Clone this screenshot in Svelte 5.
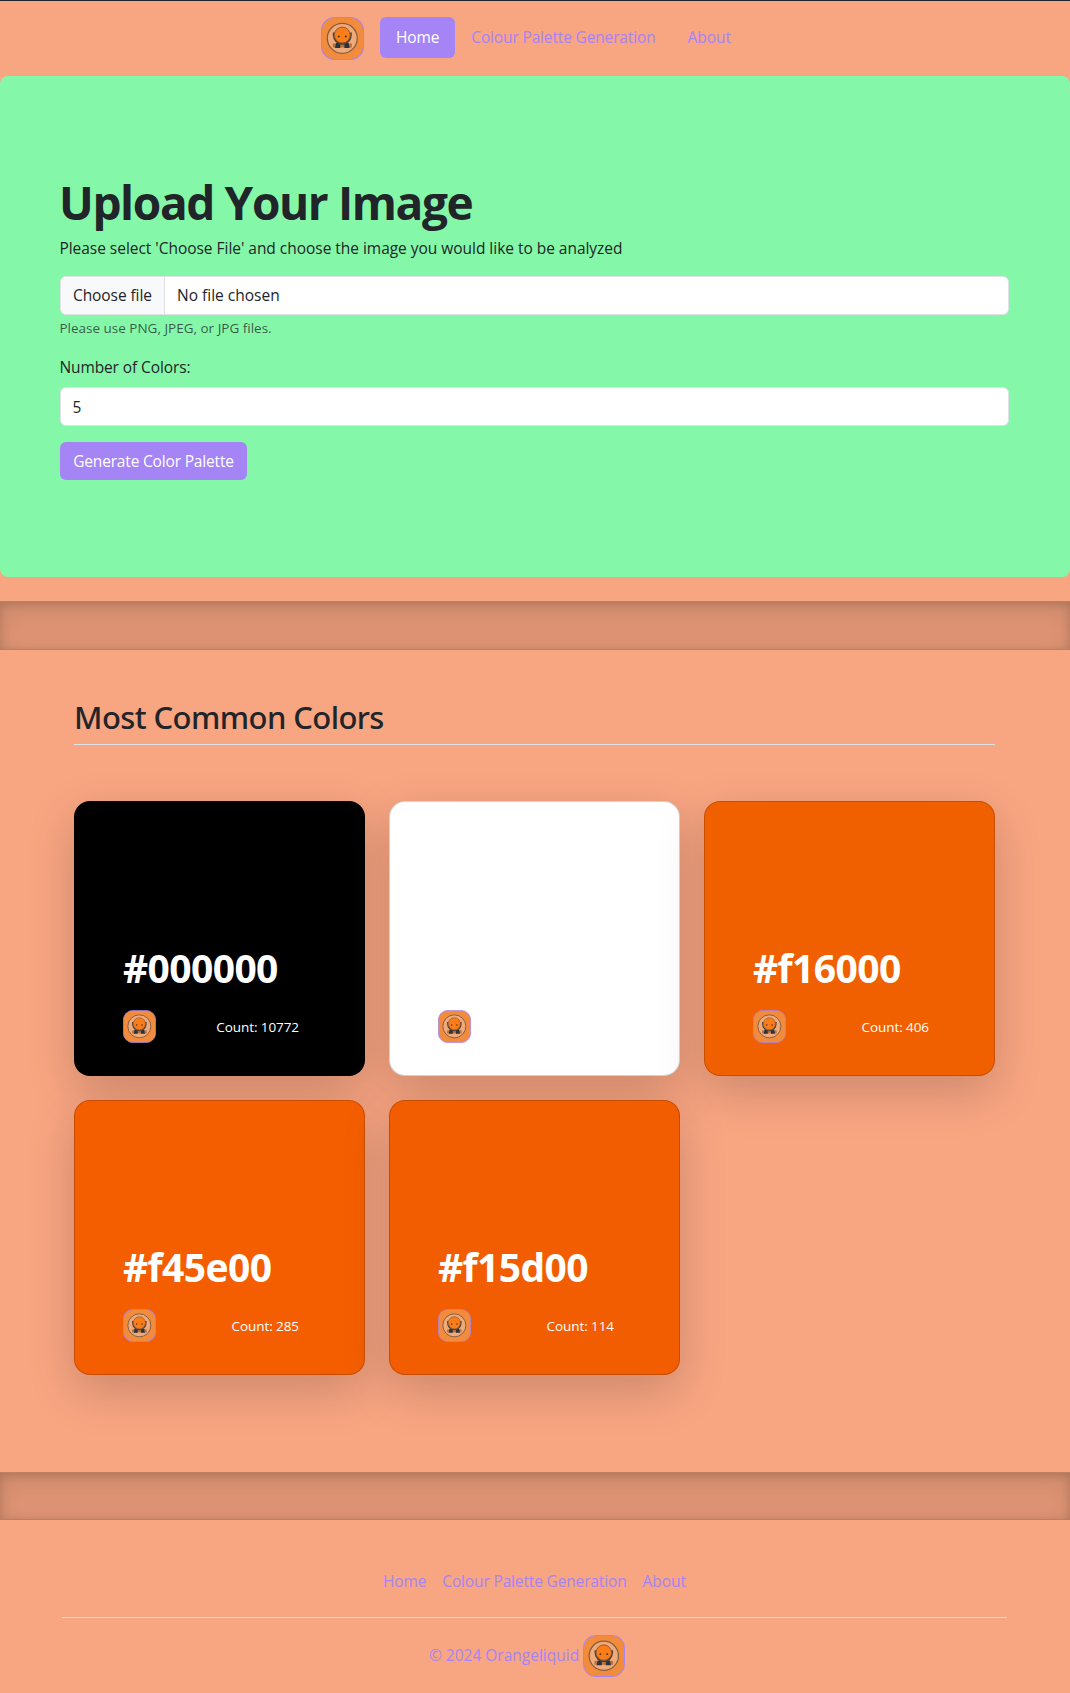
<script>
  const navLinks = [
    { label: 'Home', cls: 'home', active: true },
    { label: 'Colour Palette Generation', cls: 'palette', active: false },
    { label: 'About', cls: 'about', active: false }
  ];

  const colors = [
    { hex: '#000000', count: 10772 },
    { hex: '#ffffff', count: 1204 },
    { hex: '#f16000', count: 406 },
    { hex: '#f45e00', count: 285 },
    { hex: '#f15d00', count: 114 }
  ];

  let amount = $state('5');
</script>

{#snippet logo(cls)}
  <svg class="logo {cls}" viewBox="0 0 43 43" aria-hidden="true">
    <rect x="0.5" y="0.5" width="42" height="42" rx="12.5" fill="#f38b3c" stroke="#a584f6" />
    <circle cx="21.3" cy="21.3" r="15" fill="#efa97a" stroke="#85603f" stroke-width="1.3" />
    <path d="M11.8 26.500h19v4h-19z" fill="#b5713f" />
    <path d="M15 26h4.200v5h-5.200zM27.600 26h-4.200v5h5.200z" fill="#2b3338" />
    <path d="M12.800 15.500v2.800a8.500 8.500 0 0 0 17 0v-2.800" fill="none" stroke="#46403a" stroke-width="1.900" />
    <circle cx="21.300" cy="18" r="7.900" fill="#fa7d1a" stroke="#9a5a2c" stroke-width="1" />
    <circle cx="17.800" cy="19.600" r="1" fill="#4b3322" />
    <circle cx="24.800" cy="19.600" r="1" fill="#4b3322" />
  </svg>
{/snippet}

<header>
  {@render logo('brand')}
  <nav class="pills">
    {#each navLinks as link}
      <a href="#top" class="pill {link.cls}" class:active={link.active}>{link.label}</a>
    {/each}
  </nav>
</header>

<section class="upload">
  <h1>Upload Your Image</h1>
  <p class="lead">Please select 'Choose File' and choose the image you would like to be analyzed</p>
  <label class="file">
    <span class="choose">Choose file</span>
    <span class="chosen">No file chosen</span>
    <input type="file" hidden />
  </label>
  <p class="hint">Please use PNG, JPEG, or JPG files.</p>
  <label class="count-label" for="amount">Number of Colors:</label>
  <input id="amount" class="field" type="text" bind:value={amount} />
  <button type="button">Generate Color Palette</button>
</section>

<div class="divider"></div>

<section class="results">
  <h2>Most Common Colors</h2>
  <div class="cards">
    {#each colors as color}
      <article class="card" style:background-color={color.hex}>
        <h3>{color.hex}</h3>
        <div class="meta">
          {@render logo('small')}
          <span>Count: {color.count}</span>
        </div>
      </article>
    {/each}
  </div>
</section>

<div class="divider last"></div>

<footer>
  <nav class="links">
    {#each navLinks as link}
      <a href="#top" class={link.cls}>{link.label}</a>
    {/each}
  </nav>
  <div class="copyright">
    <span>© 2024 Orangeliquid</span>
    {@render logo('foot')}
  </div>
</footer>

<style>
  :global(body) {
    margin: 0;
    background: #f8a582;
    color: #212529;
    font-family: 'Open Sans', 'Noto Sans', sans-serif;
    font-size: 15.5px;
    line-height: 24px;
  }
  header, section, footer, header *, section *, footer * {
    box-sizing: border-box;
  }
  a {
    color: #a584f6;
    text-decoration: none;
    white-space: nowrap;
  }
  .home { letter-spacing: -0.15px; }
  .palette { letter-spacing: -0.15px; }
  .about { letter-spacing: -0.05px; }
  .logo {
    display: block;
    flex: none;
  }
  .brand { width: 43px; height: 43px; }
  .small { width: 33px; height: 33px; }
  .foot { width: 42px; height: 42px; }

  header {
    display: flex;
    justify-content: center;
    align-items: flex-start;
    gap: 16px;
    height: 76px;
    padding: 16px 2px 0 0;
    border-top: 1px solid #212529;
  }
  .pills { display: flex; }
  .pill {
    height: 41px;
    padding: 8px 16px;
    border-radius: 6px;
  }
  .pill.active {
    background: #a584f6;
    color: #fff;
  }

  .upload {
    display: flex;
    flex-direction: column;
    height: 501px;
    padding: 96px 61px 0 60px;
    background: #84f8a8;
    border-radius: 8px;
  }
  h1, h2, h3, p { margin: 0; }
  h1 {
    margin: 1px 0 5px -1px;
    font-size: 46px;
    font-weight: 700;
    line-height: 58px;
    letter-spacing: -1.38px;
  }
  .lead {
    margin: 0 0 16px -0.6px;
    letter-spacing: -0.03px;
  }
  .file, .field {
    height: 39px;
    border: 1px solid #dee2e6;
    border-radius: 6px;
    background: #fff;
  }
  .file {
    display: flex;
    overflow: hidden;
    line-height: 37px;
  }
  .choose {
    width: 104px;
    padding-left: 12px;
    background: #f8f9fa;
    border-right: 1px solid #dee2e6;
    letter-spacing: -0.08px;
  }
  .chosen {
    padding-left: 12px;
    letter-spacing: 0;
  }
  .hint {
    margin: 3px 0 16px -0.6px;
    font-size: 13.5px;
    line-height: 21px;
    color: rgba(33, 37, 41, 0.75);
  }
  .count-label {
    margin: 0 0 8px -0.6px;
    letter-spacing: -0.1px;
  }
  .field {
    margin-bottom: 16px;
    padding: 0 11.5px;
    font: inherit;
    color: inherit;
  }
  button {
    align-self: flex-start;
    width: 187px;
    height: 38px;
    padding: 0;
    border: 0;
    border-radius: 6px;
    background: #a584f6;
    color: #fff;
    font: inherit;
    letter-spacing: -0.17px;
  }

  .divider {
    box-sizing: border-box;
    height: 49px;
    border: solid rgba(0, 0, 0, 0.15);
    border-width: 1px 0;
    background: rgba(0, 0, 0, 0.1);
    box-shadow: inset 0 8px 24px rgba(0, 0, 0, 0.1), inset 0 2px 8px rgba(0, 0, 0, 0.15);
  }
  .upload + .divider { margin-top: 24px; }
  .divider.last { height: 48px; }

  .results { padding: 48px 75px 97px 74px; }
  h2 {
    padding-bottom: 8px;
    border-bottom: 1px solid #dee2e6;
    font-family: 'Noto Sans', sans-serif;
    font-size: 31px;
    font-weight: 500;
    line-height: 38px;
    letter-spacing: -0.58px;
  }
  .cards {
    display: grid;
    grid-template-columns: repeat(3, 291px);
    justify-content: space-between;
    row-gap: 24px;
    margin-top: 56px;
  }
  .card {
    height: 275px;
    padding: 142px 65px 0 48px;
    border: 1px solid rgba(0, 0, 0, 0.175);
    border-radius: 16px;
    box-shadow: 0 16px 48px rgba(0, 0, 0, 0.175);
    color: #fff;
  }
  h3 {
    margin-bottom: 18px;
    font-size: 39px;
    font-weight: 700;
    line-height: 48px;
    letter-spacing: -0.6px;
  }
  .meta {
    display: flex;
    align-items: center;
    justify-content: space-between;
    font-size: 13.5px;
    letter-spacing: -0.08px;
  }

  footer { padding: 49px 63px 0 62px; }
  .links {
    display: flex;
    justify-content: center;
    gap: 16px;
    height: 49px;
    border-bottom: 1px solid #dee2e6;
  }
  .copyright {
    display: flex;
    align-items: center;
    justify-content: center;
    gap: 4px;
    margin-top: 17px;
    padding-right: 15px;
    color: #a584f6;
  }
  .copyright span {
    padding-bottom: 2px;
  }
</style>
